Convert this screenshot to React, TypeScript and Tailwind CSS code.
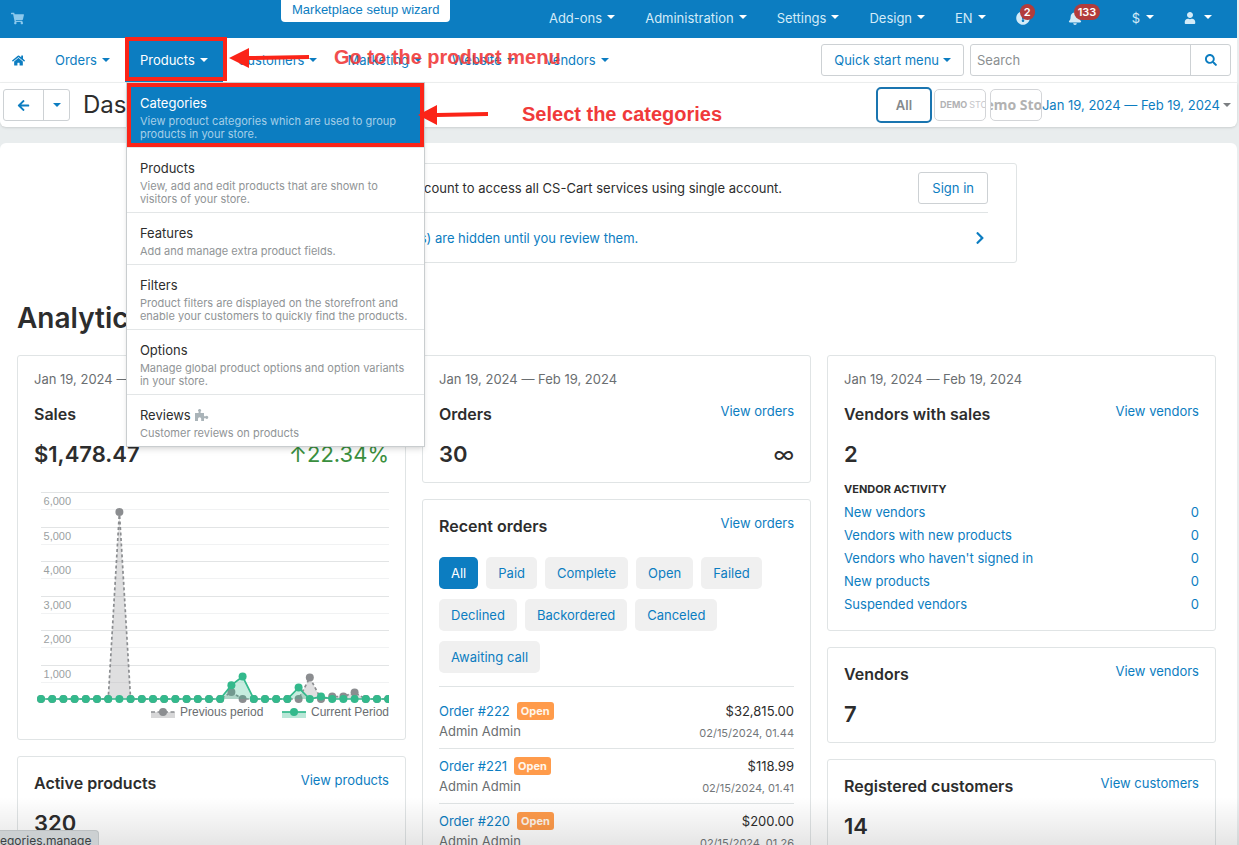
import type { ReactNode } from "react";
import { clsx } from "clsx";
import {
  FaArrowLeft,
  FaBell,
  FaChevronRight,
  FaExclamationCircle,
  FaHome,
  FaSearch,
  FaShoppingCart,
  FaUser,
} from "react-icons/fa";

const PERIOD = "Jan 19, 2024 — Feb 19, 2024";

const topMenu = ["Add-ons", "Administration", "Settings", "Design", "EN"];

const productMenu = [
  {
    title: "Categories",
    text: "View product categories which are used to group products in your store.",
    active: true,
  },
  { title: "Products", text: "View, add and edit products that are shown to visitors of your store." },
  { title: "Features", text: "Add and manage extra product fields." },
  {
    title: "Filters",
    text: "Product filters are displayed on the storefront and enable your customers to quickly find the products.",
  },
  { title: "Options", text: "Manage global product options and option variants in your store." },
  { title: "Reviews", text: "Customer reviews on products", addon: true },
];

const statuses = [
  "All",
  "Paid",
  "Complete",
  "Open",
  "Failed",
  "Declined",
  "Backordered",
  "Canceled",
  "Awaiting call",
];

const orders = [
  { id: 222, total: "$32,815.00", date: "02/15/2024, 01.44" },
  { id: 221, total: "$118.99", date: "02/15/2024, 01.41" },
  { id: 220, total: "$200.00", date: "02/15/2024, 01.26" },
];

const activity = [
  "New vendors",
  "Vendors with new products",
  "Vendors who haven't signed in",
  "New products",
  "Suspended vendors",
];

function Caret({ className }: { className?: string }) {
  return (
    <svg viewBox="0 0 8 4" className={clsx("h-1 w-2 shrink-0", className)} fill="currentColor">
      <path d="M0 0h8L4 4z" />
    </svg>
  );
}

function AddonIcon() {
  return (
    <svg viewBox="0 0 14 13" className="h-[13px] w-3.5 text-[#aab4b9]" fill="currentColor">
      <path d="M0 4h3.6V2.6a1.5 1.5 0 1 1 2 0V4H9v3.3h1.6a1.5 1.5 0 1 1 0 2H9V12H6.2V9.8a1.6 1.6 0 0 0-3.2 0V12H0z" />
    </svg>
  );
}

function TopBar() {
  return (
    <header className="flex h-[38px] items-start bg-[#0c7dc1] pr-[25px] pl-[11px] text-[#d3ebf8]">
      <a href="#store" aria-label="Storefront" className="mt-3">
        <FaShoppingCart className="size-[13px] text-[#8cc8ec]" />
      </a>
      <button className="ml-[257px] h-[22px] rounded-b bg-white px-[11px] pb-0.5 font-['Liberation_Sans',sans-serif] text-[13px] text-[#0c7dc1]">
        Marketplace setup wizard
      </button>
      <nav className="ml-auto flex h-9 items-center gap-[30px]">
        {topMenu.map((item) => (
          <button key={item} className="flex items-center gap-[5px]">
            {item}
            <Caret className="mb-0.5 text-white" />
          </button>
        ))}
        <button aria-label="Messages" className="relative flex w-[22px] items-center">
          <FaExclamationCircle className="size-3.5" />
          <span className="absolute -top-[7px] left-1 h-4 rounded-full bg-[#b23c3c] px-1 text-[11px] leading-4 font-semibold text-white">
            2
          </span>
        </button>
        <button aria-label="Notifications" className="relative flex w-[34px] items-center">
          <FaBell className="size-3.5" />
          <span className="absolute -top-[7px] left-1.5 h-4 rounded-full bg-[#b23c3c] px-1 text-[11px] leading-4 font-semibold text-white">
            133
          </span>
        </button>
        <button className="flex items-center gap-1.5">
          $
          <Caret className="mb-0.5 text-white" />
        </button>
        <button aria-label="Account" className="flex items-center gap-2">
          <FaUser className="size-3" />
          <Caret className="mb-0.5 text-white" />
        </button>
      </nav>
    </header>
  );
}

function ProductDropdown() {
  return (
    <ul className="absolute top-[44px] left-px z-20 w-[299px] border border-[#c9cdcf] bg-white shadow-md">
      {productMenu.map((item) => (
        <li key={item.title} className="border-b border-[#e3e6e7] last:border-b-0">
          <a
            href="#menu"
            className={clsx(
              "relative block px-[13px] pt-2.5 pb-1.5",
              item.active ? "bg-[#0c7dc1] text-white" : "text-[#2d2d2d]"
            )}
          >
            <span className="flex h-5 items-center gap-1">
              {item.title}
              {item.addon && <AddonIcon />}
            </span>
            <span
              className={clsx(
                "mt-0.5 block text-[11px] leading-[13px]",
                item.active ? "text-[#a5cfe8]" : "text-[#909496]"
              )}
            >
              {item.text}
            </span>
            {item.active && <span className="absolute inset-0 border-4 border-[#fb2418]" />}
          </a>
        </li>
      ))}
    </ul>
  );
}

function NavItem({ label }: { label: string }) {
  return (
    <button className="flex h-full items-center gap-[5px] px-[15px] text-[#0c7dc1]">
      {label}
      <Caret />
    </button>
  );
}

function MainNav() {
  return (
    <div className="flex h-[45px] items-center border-b border-[#eef0f0] bg-white pr-1.5 pl-3">
      <a href="#home" aria-label="Home" className="mr-[15px] text-[#0c7dc1]">
        <FaHome className="size-[13px]" />
      </a>
      <nav className="flex h-full items-center">
        <NavItem label="Orders" />
        <div className="relative h-full">
          <button className="flex h-11 items-center gap-[5px] bg-[#0c7dc1] px-[15px] text-white">
            Products
            <Caret />
          </button>
          <span className="absolute -top-px -right-1 left-0 h-11 border-4 border-[#fb2418]" />
          <ProductDropdown />
        </div>
        <NavItem label="Customers" />
        <NavItem label="Marketing" />
        <NavItem label="Website" />
        <NavItem label="Vendors" />
      </nav>
      <button className="ml-auto flex h-8 items-center gap-1 rounded-[3px] border border-[#cdd1d4] px-3 text-[#0c7dc1]">
        Quick start menu
        <Caret />
      </button>
      <form className="ml-1.5 flex h-8 w-[261px] rounded-[3px] border border-[#cdd1d4]">
        <input
          type="search"
          aria-label="Search"
          placeholder="Search"
          className="min-w-0 flex-1 px-1.5 outline-none placeholder:text-[#8b8f91]"
        />
        <button
          type="button"
          aria-label="Run search"
          className="flex w-10 items-center justify-center border-l border-[#cdd1d4] text-[#0c7dc1]"
        >
          <FaSearch className="size-3" />
        </button>
      </form>
    </div>
  );
}

function ActionBar() {
  return (
    <div className="flex h-11 items-center rounded-b-md bg-white pr-1.5 pl-[3px] shadow-sm">
      <div className="flex h-8 rounded-[3px] border border-[#cdd1d4] text-[#0c7dc1]">
        <button aria-label="Back" className="flex w-10 items-center justify-center border-r border-[#cdd1d4]">
          <FaArrowLeft className="size-[13px]" />
        </button>
        <button aria-label="Recent pages" className="flex w-[25px] items-center justify-center">
          <Caret />
        </button>
      </div>
      <h1 className="ml-[13px] text-2xl leading-8 text-[#2d2d2d]">Dashboard</h1>
      <div className="ml-auto flex items-center">
        <button className="h-9 w-14 rounded-[5px] border-2 border-[#1a75b0] font-semibold text-[#85898c]">
          All
        </button>
        <button className="ml-0.5 flex h-8 w-[52px] items-center overflow-hidden rounded-[5px] border border-[#d3d5d8] pl-[5px] text-[9px] whitespace-nowrap text-[#c6c6ca]">
          <b className="mr-0.5 text-[#b2b2b4]">DEMO</b> STORE
        </button>
        <button className="ml-1 flex h-8 w-[52px] items-center justify-center overflow-hidden rounded-[5px] border border-[#d3d5d8] font-['Noto_Sans',sans-serif] text-sm font-bold whitespace-nowrap text-[#b2b2b2]">
          Demo Store
        </button>
        <button className="flex items-center gap-[3px] text-[#0c7dc1]">
          {PERIOD}
          <Caret className="text-[#7b7f82]" />
        </button>
      </div>
    </div>
  );
}

function Notices() {
  return (
    <section className="mx-auto mt-5 w-[801px] rounded-[3px] border border-[#e0e4e5] px-7">
      <div className="flex h-[49px] items-center justify-between border-b border-[#e0e4e5]">
        <p className="text-[#2d2d2d]">
          Sign in via your Help Desk account to access all CS-Cart services using single account.
        </p>
        <button className="h-8 rounded-[3px] border border-[#cdd1d4] px-[13px] text-[#0c7dc1]">Sign in</button>
      </div>
      <a href="#reviews" className="flex h-[49px] items-center justify-between pr-px text-[#0c7dc1]">
        New vendor product review(s) are hidden until you review them.
        <FaChevronRight className="size-3.5" />
      </a>
    </section>
  );
}

type CardProps = {
  title: string;
  link?: string;
  period?: boolean;
  value?: string;
  aside?: ReactNode;
  children?: ReactNode;
};

function Card({ title, link, period, value, aside, children }: CardProps) {
  return (
    <section className="rounded-[3px] border border-[#e0e4e5] bg-white px-4 pt-4 pb-[13px]">
      {period && <p className="mb-[18px] leading-3.5 text-[#6a6e71]">{PERIOD}</p>}
      <div className="flex items-start justify-between">
        <h3 className="text-base leading-5 font-semibold text-[#2d2d2d]">{title}</h3>
        {link && (
          <a href="#view" className="leading-3.5 text-[#0c7dc1]">
            {link}
          </a>
        )}
      </div>
      {value && (
        <div className="mt-[15px] flex items-center justify-between text-[22px] leading-[30px]">
          <span className="font-semibold text-[#2d2d2d]">{value}</span>
          {aside}
        </div>
      )}
      {children}
    </section>
  );
}

const X0 = 7;
const STEP = 11.2;
const BASE = 211;
const UNIT = 34.5;

// sparse daily totals, every other day is zero
const previous: Record<number, number> = { 7: 5420, 17: 200, 24: 620, 26: 70, 27: 70, 28: 190 };
const current: Record<number, number> = { 17: 400, 18: 650, 23: 330, 25: 70 };

function toPoints(data: Record<number, number>) {
  return Array.from({ length: 32 }, (_, i) => [X0 + i * STEP, BASE - ((data[i] ?? 0) / 1000) * UNIT]);
}

function Series({ data, color, dashed }: { data: Record<number, number>; color: string; dashed?: boolean }) {
  const points = toPoints(data);
  const line = points.map((p) => p.join(",")).join(" ");
  return (
    <g>
      <polygon points={`${X0},${BASE} ${line} ${X0 + 31 * STEP},${BASE}`} fill={color} fillOpacity={0.28} />
      <polyline points={line} fill="none" stroke={color} strokeWidth={1.7} strokeDasharray={dashed ? "3 2.5" : undefined} />
      {points.map(([x, y]) => (
        <circle key={x} cx={x} cy={y} r={4} fill={color} />
      ))}
    </g>
  );
}

function SalesChart() {
  return (
    <svg viewBox="0 0 355 238" className="mt-[19px] block w-full font-['Liberation_Sans',sans-serif]">
      {Array.from({ length: 12 }, (_, i) => (
        <line
          key={i}
          x1={X0}
          x2={355}
          y1={Math.round(4 + (i * UNIT) / 2) + 0.5}
          y2={Math.round(4 + (i * UNIT) / 2) + 0.5}
          stroke={i % 2 ? "#f1f2f3" : "#e2e4e5"}
        />
      ))}
      {[6, 5, 4, 3, 2, 1].map((n, i) => (
        <text key={n} x={9.5} y={17 + i * UNIT} fontSize={11} fill="#9b9fa2">
          {n},000
        </text>
      ))}
      <Series data={previous} color="#8b8d90" dashed />
      <Series data={current} color="#33b98c" />
      <g fontSize={12} fill="#6a6e71">
        <rect x={117} y={224} width={24} height={6} fill="#8b8d90" fillOpacity={0.35} />
        <path d="M117 224h24" stroke="#8b8d90" strokeWidth={1.7} strokeDasharray="4 2.5" />
        <circle cx={129} cy={224} r={4} fill="#8b8d90" />
        <text x={146} y={228}>Previous period</text>
        <rect x={248} y={224} width={24} height={6} fill="#33b98c" fillOpacity={0.35} />
        <path d="M248 224h24" stroke="#33b98c" strokeWidth={1.7} />
        <circle cx={260} cy={224} r={4} fill="#33b98c" />
        <text x={277} y={228}>Current Period</text>
      </g>
    </svg>
  );
}

function RecentOrders() {
  return (
    <Card title="Recent orders" link="View orders">
      <div className="mt-[21px] flex flex-wrap gap-x-2 gap-y-2.5">
        {statuses.map((status, i) => (
          <button
            key={status}
            className={clsx(
              "h-8 rounded-[5px] px-3",
              i === 0 ? "bg-[#0c7dc1] text-white" : "bg-[#f0f0f0] text-[#0c7dc1]"
            )}
          >
            {status}
          </button>
        ))}
      </div>
      <ul className="mt-[13px] border-t border-[#e0e4e5] pt-[7px]">
        {orders.map((order) => (
          <li key={order.id} className="flex h-[55px] justify-between border-b border-[#e0e4e5] pt-[7px] leading-5">
            <div>
              <div className="flex items-center gap-[7px]">
                <a href="#order" className="text-[#0c7dc1]">
                  Order #{order.id}
                </a>
                <span className="rounded-[3px] bg-[#ff9b4b] px-1 text-[11px] leading-[18px] font-bold text-[#fff6ec]">
                  Open
                </span>
              </div>
              <div className="text-[#6a6e71]">Admin Admin</div>
            </div>
            <div className="text-right">
              <div className="text-[#2d2d2d]">{order.total}</div>
              <div className="text-[11px] leading-6 text-[#73777a]">{order.date}</div>
            </div>
          </li>
        ))}
      </ul>
    </Card>
  );
}

function Callouts() {
  return (
    <div className="pointer-events-none absolute inset-0 z-30 font-['Liberation_Sans',sans-serif] text-xl leading-6 font-bold text-[#f03a3a]">
      <svg viewBox="0 0 80 20" className="absolute top-12 left-[229px] h-5 w-20" fill="#fb2418">
        <path d="M0 10 20 0v8l60-1v4l-60 1v8z" />
      </svg>
      <p className="absolute top-[45px] left-[334px] opacity-90">Go to the product menu</p>
      <svg viewBox="0 0 70 20" className="absolute top-[105px] left-[418px] h-5 w-[70px]" fill="#fb2418">
        <path d="M0 10 19 0v8l51-1v4l-51 1v8z" />
      </svg>
      <p className="absolute top-[102px] left-[522px]">Select the categories</p>
    </div>
  );
}

export default function App() {
  return (
    <div className="relative h-screen overflow-hidden bg-[#e9edee] pr-0.5 font-[Inter,sans-serif] text-[13px] leading-5">
      <TopBar />
      <MainNav />
      <ActionBar />
      <main className="mt-4 min-h-screen rounded-t-md bg-white pr-[21px] pl-[17px]">
        <div className="flow-root">
          <Notices />
        </div>
        <h2 className="mt-[37px] mb-[19px] text-[28px] leading-9 font-semibold text-[#2d2d2d]">Analytics</h2>
        <div className="grid grid-cols-3 items-start gap-4">
          <div className="grid gap-4">
            <Card
              period
              title="Sales"
              value="$1,478.47"
              aside={<span className="text-[#3a8f3e]">↑22.34%</span>}
            >
              <SalesChart />
            </Card>
            <Card title="Active products" link="View products" value="320" />
          </div>
          <div className="grid gap-4">
            <Card
              period
              title="Orders"
              link="View orders"
              value="30"
              aside={<span className="text-[#2d2d2d]">∞</span>}
            />
            <RecentOrders />
          </div>
          <div className="grid gap-4">
            <Card period title="Vendors with sales" link="View vendors" value="2">
              <h4 className="mt-3 text-[11px] leading-4 font-bold text-[#2d2d2d]">VENDOR ACTIVITY</h4>
              <ul className="mt-1 pb-px">
                {activity.map((item) => (
                  <li key={item}>
                    <a href="#activity" className="flex justify-between leading-[23px] text-[#0c7dc1]">
                      <span>{item}</span>
                      <span>0</span>
                    </a>
                  </li>
                ))}
              </ul>
            </Card>
            <Card title="Vendors" link="View vendors" value="7" />
            <Card title="Registered customers" link="View customers" value="14" />
          </div>
        </div>
      </main>
      <Callouts />
      <div className="pointer-events-none absolute inset-x-0 bottom-0 h-12 bg-linear-to-b from-transparent to-black/10" />
      <div className="absolute bottom-0 left-0 h-[15px] overflow-hidden rounded-tr border-t border-r border-[#bcc0c2] bg-[#ccd0d2] pr-[7px] text-xs leading-5 text-[#3c4043]">
        egories.manage
      </div>
    </div>
  );
}
